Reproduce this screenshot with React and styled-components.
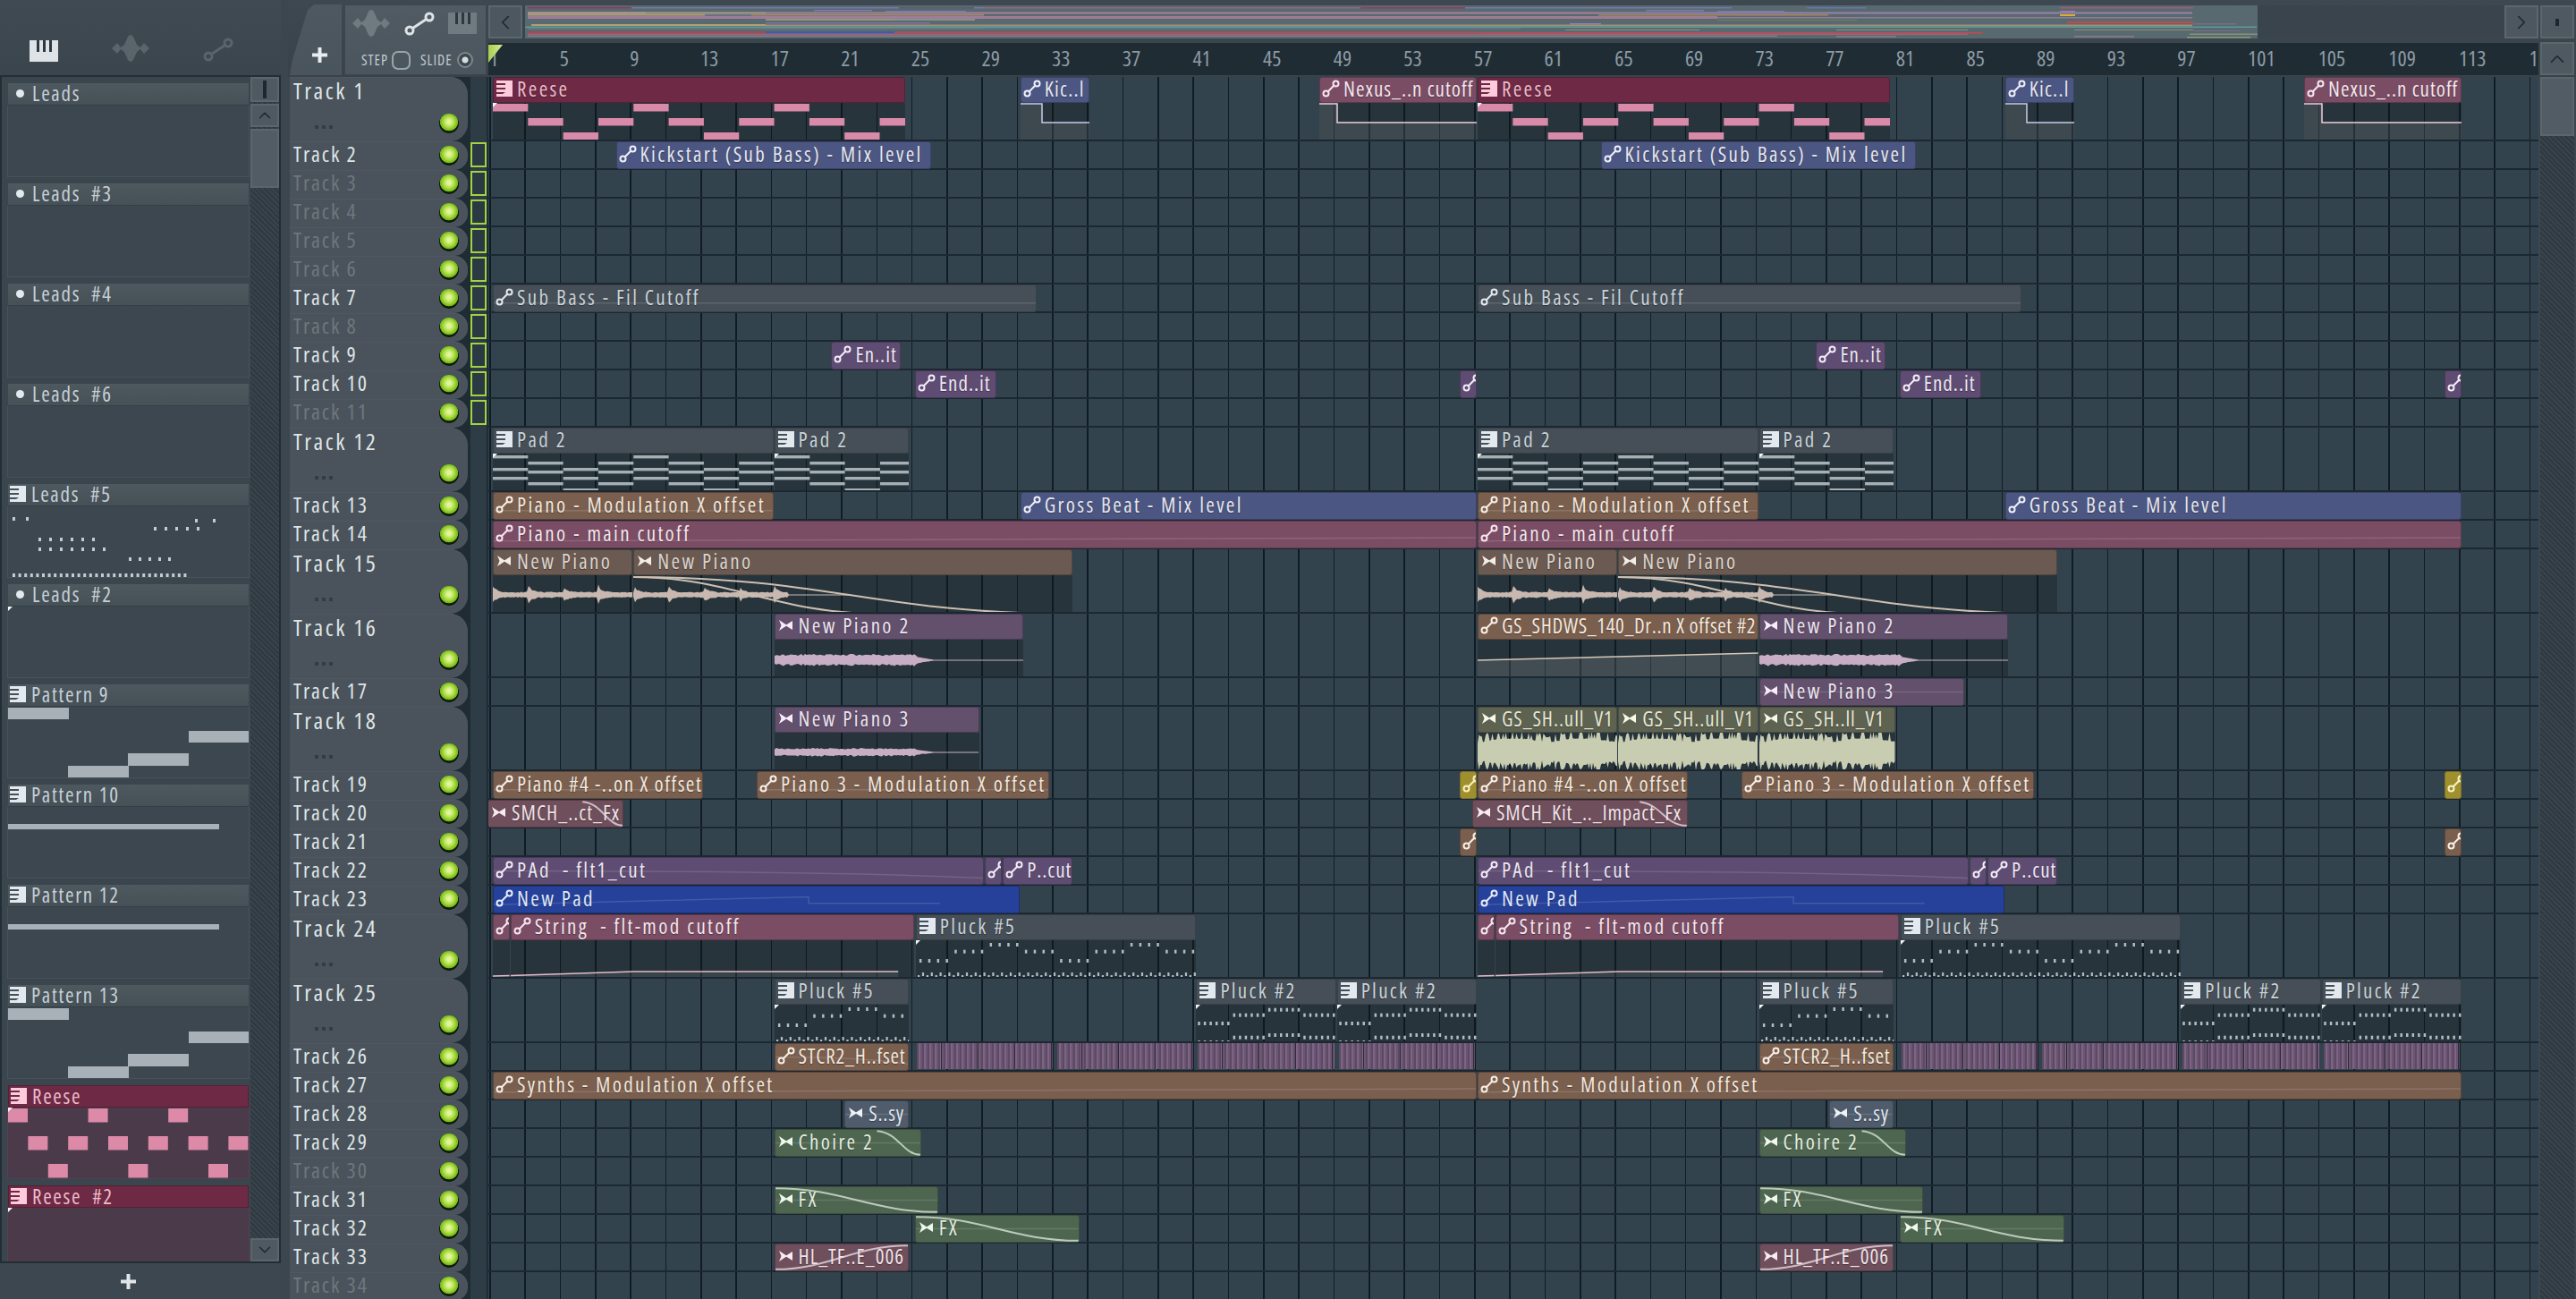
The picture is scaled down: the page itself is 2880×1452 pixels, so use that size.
import React from 'react';
import styled, { createGlobalStyle } from 'styled-components';
import { ChevronUp, ChevronDown, ChevronLeft, ChevronRight } from 'lucide-react';

const BAR = 19.66;
const STEP = BAR * 2;
const FONT = '"Open Sans", "Roboto", "Liberation Sans", sans-serif';

const GlobalStyle = createGlobalStyle`
    html, body { margin: 0; padding: 0; background: #3b464e; }
    * { box-sizing: border-box; }
`;

const tones = {
    reese: { bg: '#6e2a44', edge: '#55203a', text: '#ecbccd', icon: '#fdcbdc' },
    rose: { bg: '#7b4d65', edge: '#5e394d', text: '#f3e6ec', icon: '#f6e6ee' },
    blue: { bg: '#4c5682', edge: '#3a4266', text: '#e6e7ee', icon: '#eef0f8' },
    brown: { bg: '#7a5f4f', edge: '#5b463a', text: '#f2e7dd', icon: '#f8efe6' },
    purple: { bg: '#5f4c72', edge: '#483958', text: '#ece6f2', icon: '#f2ecf8' },
    lilac: { bg: '#63506c', edge: '#4b3c52', text: '#ece4f0', icon: '#f8ecfa' },
    deep: { bg: '#26419a', edge: '#1a2f75', text: '#dfe6f8', icon: '#e6ecfc' },
    gray: { bg: '#464f57', edge: '#384047', text: '#c8d2d8', icon: '#e2eaef' },
    taupe: { bg: '#6a5a51', edge: '#52453e', text: '#dcd4ce', icon: '#f2ece6' },
    olive: { bg: '#5e6250', edge: '#4a4d3e', text: '#e4e6d6', icon: '#f6f8e8' },
    green: { bg: '#4e6650', edge: '#3c4f3e', text: '#e2ece0', icon: '#f0f8ee' },
    mauve: { bg: '#6e4f5b', edge: '#553c46', text: '#f0e2e8', icon: '#f8ecf0' },
    slate: { bg: '#505c6c', edge: '#3e4854', text: '#dfe6ee', icon: '#eef3f8' },
    gold: { bg: '#a08f2f', edge: '#7f7124', text: '#f8f2c0', icon: '#f8f2c0' },
};

function rng(seed) {
    let s = seed;
    return () => {
        s = (s * 16807) % 2147483647;
        return s / 2147483647;
    };
}

function wavePath(w, mid, env, seed, step = 2) {
    const r = rng(seed);
    const top = [];
    const bottom = [];
    for (let x = 0; x <= w; x += step) {
        const a = env(x, r());
        top.push(`${x} ${(mid - a).toFixed(1)}`);
        bottom.unshift(`${x} ${(mid + a * (0.75 + 0.25 * r())).toFixed(1)}`);
    }
    return `M${top.join('L')}L${bottom.join('L')}Z`;
}

const pianoEnv = (offset, end, lineEnd) => (x, n) => {
    const at = x + offset;
    if (at > lineEnd) return 0;
    if (at > end) return 0.5;
    const phase = at % STEP;
    return 2.5 + 8.5 * Math.exp(-phase / 4) * (0.8 + 0.2 * n) + n;
};
const flatEnv = (amp, end) => (x, n) => {
    if (x > end + 20) return 0.5;
    if (x > end) return 0.5 + (amp * (end + 20 - x)) / 40;
    return amp * (0.7 + 0.3 * n);
};
const gsEnv = (x, n) => {
    const lobe = Math.abs(Math.sin((x / (BAR * 4)) * Math.PI));
    return 10 + 5 * lobe + (n > 0.62 ? 10 * n : 2 * n);
};

const Triangle = () => <polygon points="0,0 5,0 0,5" fill="#f4f6f6" />;

function ReeseArt({ w }) {
    const rects = [];
    for (let i = 0; i * STEP < w; i++) {
        const y = i % 2 ? 17 : i % 4 === 0 ? 1 : 33;
        rects.push(<rect key={i} x={i * STEP} y={y} width={STEP} height={8.5} fill="#d98aa8" />);
    }
    return <>{rects}<Triangle /></>;
}

function PadArt({ w }) {
    const rows = [[2, 16, 26], [9, 19, 32], [16, 26, 39], [9, 19, 32]];
    const rects = [];
    for (let i = 0; i * STEP < w; i++) {
        rows[i % 4].forEach((y) => {
            rects.push(<rect key={`${i}-${y}`} x={i * STEP} y={y} width={STEP} height={3.4} fill="#a6afb4" />);
        });
    }
    return <>{rects}<Triangle /></>;
}

function DotsArt({ w, rows, low, count }) {
    const rects = [];
    for (let i = 0; i * STEP < w; i++) {
        const gap = STEP / count;
        for (let d = 0; d < count; d++) {
            const x = i * STEP + gap * d + gap / 2 - 1;
            rects.push(<rect key={`a${i}-${d}`} x={x} y={rows[i % 4]} width={2.5} height={4} fill="#b4bcc1" />);
            if (low) rects.push(<rect key={`b${i}-${d}`} x={x} y={low[i % 4]} width={2.5} height={4} fill="#b4bcc1" />);
        }
    }
    return <>{rects}<Triangle /></>;
}

function Pluck5Art({ w }) {
    const rects = [];
    for (let x = 2, i = 0; x < w; x += 4.9, i++) {
        rects.push(<rect key={i} x={x} y={i % 2 ? 36 : 39} width={2.2} height={4} fill="#b4bcc1" />);
    }
    return <><DotsArt w={w} rows={[21, 10.7, 3, 10.7]} count={4} />{rects}</>;
}

function StepArt({ w, x, line }) {
    return (
        <>
            <path d={`M0 1H${x}V22H${w}V44H0Z`} fill="rgba(255,255,255,0.1)" />
            <path d={`M0 1H${x}V22H${w}`} fill="none" stroke={line} strokeWidth="1.5" />
        </>
    );
}

function RampArt({ w, d, fill, line }) {
    return (
        <>
            <path d={`${d}V44H0Z`} fill={fill} />
            <path d={d} fill="none" stroke={line} strokeWidth="1.5" />
        </>
    );
}

const artFor = {
    reese: (w) => <ReeseArt w={w} />,
    pad: (w) => <PadArt w={w} />,
    pluck5: (w) => <Pluck5Art w={w} />,
    pluck2: (w) => <DotsArt w={w} rows={[19, 9.7, 3.7, 9.7]} low={[40, 34.7, 32, 34.7]} count={6} />,
    kic: (w) => <StepArt w={w} x={24} line="#c8cce8" />,
    nexus: (w) => <StepArt w={w} x={20} line="#eccfdc" />,
    piano1: (w) => <path d={wavePath(w, 22, pianoEnv(0, 340, 500), 11)} fill="#c8b8b0" />,
    piano2: (w) => (
        <>
            <path d={wavePath(w, 22, pianoEnv(157, 330, 400), 17)} fill="#c8b8b0" />
            <path d="M0 2C110 2 160 43 275 43" fill="none" stroke="#cdbfb2" strokeWidth="2" />
            <path d="M0 2C220 2 270 43 489 43" fill="none" stroke="#cdbfb2" strokeWidth="2" />
        </>
    ),
    newPiano2: (w) => <path d={wavePath(w, 23, flatEnv(7, 158), 23)} fill="#c8aec4" />,
    newPiano3: (w) => <path d={wavePath(w, 22, flatEnv(5, 158), 29)} fill="#c8aec4" />,
    gsOffset: (w) => <RampArt w={w} d={`M0 23L${w} 15`} fill="rgba(255,255,255,0.12)" line="#d8c8b8" />,
    gs: (w) => <path d={wavePath(w, 22, gsEnv, 37, 1.5)} fill="#c8ccb0" />,
    stringHead: (w) => <RampArt w={w} d={`M0 40L${w} 39.5`} fill="rgba(255,255,255,0.08)" line="#e4bccc" />,
    string: (w) => (
        <RampArt w={w} d={`M0 39.5L${BAR * 7} 35H${w - 18}`} fill="rgba(255,255,255,0.08)" line="#e4bccc" />
    ),
};

const faintLines = {
    flat: 'M0 68H100',
    rise: 'M0 75C40 72 70 68 100 62',
    fall: 'M0 50C50 50 80 60 100 78',
    step: 'M0 70L60 40V65H85',
    mid: 'M0 50H100',
};
const curves = {
    fx: 'M0 4C40 4 60 96 100 96',
    tail: 'M70 4C85 10 88 96 100 96',
    end: 'M78 4C88 14 90 96 100 96',
    cross: 'M0 96C40 96 60 4 100 4',
};

const both = (list) => [...list, ...list.map((c) => ({ ...c, b: c.b + 56 }))];

const trackClips = {
    1: both([
        { b: 0, l: 23.5, n: 'Reese', k: 'p', c: 'reese', art: 'reese' },
        { b: 30, l: 4, n: 'Kic..l', k: 'a', c: 'blue', art: 'kic', ls: 1.2 },
        { b: 47, l: 9, n: 'Nexus_..n cutoff', k: 'a', c: 'rose', art: 'nexus', ls: 1 },
    ]),
    2: both([{ b: 7, l: 18, n: 'Kickstart (Sub Bass) - Mix level', k: 'a', c: 'blue' }]),
    7: both([{ b: 0, l: 31, n: 'Sub Bass - Fil Cutoff', k: 'a', c: 'gray', line: 'flat' }]),
    9: both([{ b: 19.25, l: 4, n: 'En..it', k: 'a', c: 'purple', ls: 1 }]),
    10: both([
        { b: 24, l: 4.7, n: 'End..it', k: 'a', c: 'purple', ls: 1 },
        { b: 55, l: 1, n: '', k: 'a', c: 'purple' },
    ]),
    12: both([
        { b: 0, l: 16, n: 'Pad 2', k: 'p', c: 'gray', art: 'pad' },
        { b: 16, l: 7.7, n: 'Pad 2', k: 'p', c: 'gray', art: 'pad' },
    ]),
    13: both([
        { b: 0, l: 16, n: 'Piano - Modulation X offset', k: 'a', c: 'brown', line: 'flat' },
        { b: 30, l: 26, n: 'Gross Beat - Mix level', k: 'a', c: 'blue' },
    ]),
    14: both([{ b: 0, l: 56, n: 'Piano - main cutoff', k: 'a', c: 'rose', line: 'rise' }]),
    15: both([
        { b: 0, l: 8, n: 'New Piano', k: 'w', c: 'taupe', art: 'piano1' },
        { b: 8, l: 25, n: 'New Piano', k: 'w', c: 'taupe', art: 'piano2' },
    ]),
    16: [
        { b: 16, l: 14.2, n: 'New Piano 2', k: 'w', c: 'lilac', art: 'newPiano2' },
        { b: 56, l: 16, n: 'GS_SHDWS_140_Dr..n X offset #2', k: 'a', c: 'brown', art: 'gsOffset', ls: 0.6 },
        { b: 72, l: 14.2, n: 'New Piano 2', k: 'w', c: 'lilac', art: 'newPiano2' },
    ],
    17: [{ b: 72, l: 11.7, n: 'New Piano 3', k: 'w', c: 'lilac', line: 'mid' }],
    18: [
        { b: 16, l: 11.7, n: 'New Piano 3', k: 'w', c: 'lilac', art: 'newPiano3' },
        { b: 56, l: 8, n: 'GS_SH..ull_V1', k: 'w', c: 'olive', art: 'gs', ls: 0.9 },
        { b: 64, l: 8, n: 'GS_SH..ull_V1', k: 'w', c: 'olive', art: 'gs', ls: 0.9 },
        { b: 72, l: 7.8, n: 'GS_SH..ll_V1', k: 'w', c: 'olive', art: 'gs', ls: 0.9 },
    ],
    19: both([
        { b: 0, l: 12, n: 'Piano #4 -..on X offset', k: 'a', c: 'brown', line: 'flat', ls: 1.5 },
        { b: 15, l: 16.7, n: 'Piano 3 - Modulation X offset', k: 'a', c: 'brown', line: 'flat' },
        { b: 55, l: 1, n: '', k: 'a', c: 'gold' },
    ]),
    20: [
        { b: -0.3, l: 7.8, n: 'SMCH_..ct_Fx', k: 'w', c: 'mauve', curve: 'tail', ls: 1 },
        { b: 55.7, l: 12.3, n: 'SMCH_Kit_.._Impact_Fx', k: 'w', c: 'mauve', curve: 'end', ls: 0.8 },
    ],
    21: both([{ b: 55, l: 1, n: '', k: 'a', c: 'brown' }]),
    22: both([
        { b: 0, l: 28, n: 'PAd  - flt1_cut', k: 'a', c: 'purple', line: 'fall' },
        { b: 28, l: 1, n: '', k: 'a', c: 'purple' },
        { b: 29, l: 4, n: 'P..cut', k: 'a', c: 'purple', ls: 1 },
    ]),
    23: both([{ b: 0, l: 30, n: 'New Pad', k: 'a', c: 'deep', line: 'step' }]),
    24: both([
        { b: 0, l: 1, n: '', k: 'a', c: 'rose', art: 'stringHead' },
        { b: 1, l: 23, n: 'String  - flt-mod cutoff', k: 'a', c: 'rose', art: 'string' },
        { b: 24.05, l: 16, n: 'Pluck #5', k: 'p', c: 'gray', art: 'pluck5' },
    ]),
    25: both([
        { b: 16, l: 7.7, n: 'Pluck #5', k: 'p', c: 'gray', art: 'pluck5' },
        { b: 40, l: 8, n: 'Pluck #2', k: 'p', c: 'gray', art: 'pluck2' },
        { b: 48, l: 8, n: 'Pluck #2', k: 'p', c: 'gray', art: 'pluck2' },
    ]),
    26: both([
        { b: 16, l: 7.7, n: 'STCR2_H..fset', k: 'a', c: 'brown', line: 'fall', ls: 0.8 },
        { b: 24.1, l: 7.8, strip: true },
        { b: 32.1, l: 7.8, strip: true },
        { b: 40.1, l: 7.8, strip: true },
        { b: 48.1, l: 7.8, strip: true },
    ]),
    27: both([{ b: 0, l: 56, n: 'Synths - Modulation X offset', k: 'a', c: 'brown', line: 'rise' }]),
    28: both([{ b: 20, l: 3.7, n: 'S..sy', k: 'w', c: 'slate', line: 'mid', ls: 0.8 }]),
    29: both([{ b: 16, l: 8.4, n: 'Choire 2', k: 'w', c: 'green', line: 'mid', curve: 'tail' }]),
    31: both([{ b: 16, l: 9.4, n: 'FX', k: 'w', c: 'green', line: 'mid', curve: 'fx' }]),
    32: both([{ b: 24, l: 9.4, n: 'FX', k: 'w', c: 'green', line: 'mid', curve: 'fx' }]),
    33: both([{ b: 16, l: 7.7, n: 'HL_TF..E_006', k: 'w', c: 'mauve', curve: 'cross', ls: 1 }]),
};

const tallTracks = [1, 12, 15, 16, 18, 24, 25];
const mutedTracks = [3, 4, 5, 6, 8, 11, 30, 34];
const tracks = Array.from({ length: 34 }, (_, i) => i + 1);

const Screen = styled.div`
    display: flex;
    width: 2880px;
    height: 1452px;
    overflow: hidden;
    background: #3b464e;
    font-family: ${FONT};
    font-stretch: 85%;
`;

const Picker = styled.aside`
    width: 314px;
    flex: none;
    display: flex;
    flex-direction: column;
    height: 100%;
`;

const PickerTop = styled.div`
    height: 86px;
    flex: none;
    display: flex;
    align-items: flex-end;
    gap: 60px;
    padding: 0 0 15px 33px;
    background: linear-gradient(#3f4a52, #3a454d);
    border-bottom: 2px solid #232f37;
`;

const PickerMiddle = styled.div`
    flex: 1;
    min-height: 0;
    display: flex;
    border-left: 2px solid #222e36;
    border-right: 2px solid #222e36;
    border-bottom: 2px solid #222e36;
`;

const PickerList = styled.div`
    flex: 1;
    padding: 7px 1px 0 6px;
    overflow: hidden;
    background: #3a454e;
`;

const Item = styled.div`
    height: 112px;
    display: flex;
    flex-direction: column;
    padding-bottom: 7px;
`;

const ItemHead = styled.div`
    height: 25px;
    flex: none;
    display: flex;
    align-items: center;
    gap: 6px;
    margin: 0 1px;
    padding: 0 0 2px 2px;
    background: ${(p) => (p.$rose ? '#6e2a44' : 'linear-gradient(#4e585f, #465057)')};
    border: ${(p) => (p.$rose ? '1px solid #571f36' : 'none')};
    border-bottom: 1px solid ${(p) => (p.$rose ? '#571f36' : '#333e46')};
    color: ${(p) => (p.$rose ? '#ecbccd' : '#c6d0d6')};
    font-size: 23px;
    line-height: 24px;
    letter-spacing: 1.7px;
    white-space: pre;
`;

const ItemBody = styled.div`
    flex: 1;
    background: ${(p) => (p.$rose ? '#4a3a4a' : '#3c4750')};
    border: 1px solid ${(p) => (p.$rose ? '#524250' : '#465159')};
    border-top: none;
    overflow: hidden;
`;

const Dot = styled.span`
    width: 9px;
    height: 9px;
    margin: 0 3px 0 7px;
    border-radius: 50%;
    background: #e2eaee;
`;

const ScrollColumn = styled.div`
    width: 32px;
    flex: none;
    display: flex;
    flex-direction: column;
    gap: 2px;
    background: repeating-linear-gradient(45deg, #39434b 0 2px, #2f3941 2px 4px);
`;

const ScrollButton = styled.div`
    height: ${(p) => p.$h}px;
    flex: none;
    display: flex;
    align-items: center;
    justify-content: center;
    background: #4e5961;
    border: 2px solid #5a656c;
    color: #1c272e;
`;

const ScrollThumb = styled(ScrollButton)`
    background: #515c64;
`;

const ScrollFill = styled.div`
    flex: 1;
`;

const TickMark = styled.span`
    width: ${(p) => p.$w}px;
    height: ${(p) => p.$h}px;
    background: #1c272e;
`;

const PickerFoot = styled.div`
    height: 40px;
    flex: none;
    display: flex;
    align-items: center;
    justify-content: center;
    padding-right: 28px;
    background: #3c4750;
    color: #dfe5e8;
`;

const Playlist = styled.main`
    flex: 1;
    min-width: 0;
    display: flex;
    flex-direction: column;
    padding-left: 8px;
`;

const TopBar = styled.div`
    height: 86px;
    flex: none;
    display: flex;
    padding-left: 2px;
    background: linear-gradient(#3d4850, #394249);
`;

const TabArea = styled.div`
    width: 220px;
    flex: none;
    display: flex;
    gap: 3px;
    padding-top: 5px;
    height: 84px;
`;

const AddTab = styled.div`
    width: 58px;
    flex: none;
    height: 100%;
    display: flex;
    align-items: flex-end;
    padding: 0 0 14px 25px;
    color: #e8edef;
    background: linear-gradient(#4e5860, #4a545c);
    clip-path: polygon(0 100%, 3px 78%, 20px 8%, 27px 0, 100% 0, 100% 100%);
`;

const ToolTab = styled.div`
    flex: 1;
    min-width: 0;
    display: flex;
    flex-direction: column;
    background: linear-gradient(#515b63, #4b555d);
    border: 1px solid #3b464e;
    padding: 4px 10px 4px 8px;
`;

const ToolIcons = styled.div`
    display: flex;
    justify-content: space-between;
    align-items: center;
    height: 32px;
`;

const SnapRow = styled.div`
    display: flex;
    align-items: center;
    margin-top: auto;
    padding: 0 0 1px 10px;
    color: #c2ccd2;
    font-size: 16px;
    letter-spacing: 1px;
`;

const StepBox = styled.span`
    width: 21px;
    height: 21px;
    margin: 0 11px 0 4px;
    border: 2px solid #9aa5ab;
    border-radius: 7px;
`;

const SlideRadio = styled.span`
    width: 18px;
    height: 18px;
    margin-left: 5px;
    border-radius: 50%;
    border: 2px solid #7d878d;
    background: radial-gradient(circle, #d4dce0 0 3px, #3d474f 4px);
`;

const TimeArea = styled.div`
    flex: 1;
    min-width: 0;
    margin-left: 2px;
    display: flex;
    flex-direction: column;
`;

const OverviewRow = styled.div`
    height: 37px;
    margin-top: 6px;
    flex: none;
    display: flex;
    gap: 3px;
    background: #3a444c;
`;

const NavButton = styled.div`
    width: ${(p) => p.$w}px;
    flex: none;
    display: flex;
    align-items: center;
    justify-content: center;
    background: #4d5760;
    border: 2px solid #5c666d;
    color: #1c272e;
`;

const OverviewTrack = styled.div`
    flex: 1;
    min-width: 0;
`;

const Ruler = styled.div`
    position: relative;
    height: 36px;
    margin-top: 5px;
    flex: none;
    overflow: hidden;
    background: #1f2c34;
`;

const BarLabel = styled.span.attrs((p) => ({ style: { left: `${p.$x}px` } }))`
    position: absolute;
    top: 3px;
    color: #8d9ba5;
    font-size: 24px;
    line-height: 28px;
`;

const PlayMarker = styled.span`
    position: absolute;
    left: 0;
    top: 2px;
    width: 16px;
    height: 20px;
    background: linear-gradient(90deg, #a6cf4e, #d6eb9a);
    clip-path: polygon(0 0, 100% 0, 0 100%);
`;

const Corner = styled.div`
    width: 38px;
    flex: none;
    margin: 6px 2px 0 2px;
    display: flex;
    flex-direction: column;
    gap: 4px;
`;

const Body = styled.div`
    flex: 1;
    min-height: 0;
    display: flex;
    padding-left: 2px;
`;

const Rows = styled.div`
    flex: 1;
    min-width: 0;
    overflow: hidden;
`;

const Row = styled.div`
    height: ${(p) => (p.$tall ? 72 : 32)}px;
    display: flex;
    background: #1f2c34;
`;

const Head = styled.div`
    width: 199px;
    flex: none;
    display: flex;
    justify-content: space-between;
    padding: 0 10px 0 4px;
    align-items: ${(p) => (p.$tall ? 'flex-end' : 'center')};
    padding-bottom: ${(p) => (p.$tall ? 9 : 1)}px;
    background: #4a535b;
    border-radius: 0 ${(p) => (p.$tall ? 20 : 15)}px ${(p) => (p.$tall ? 20 : 15)}px 0;
    box-shadow: inset 0 1px 0 #4f5860;
`;

const NameColumn = styled.div`
    display: flex;
    flex-direction: column;
    align-self: stretch;
    justify-content: ${(p) => (p.$tall ? 'flex-start' : 'center')};
    padding-bottom: ${(p) => (p.$tall ? 0 : 3)}px;
`;

const TrackName = styled.span`
    color: ${(p) => (p.$muted ? '#6d777d' : '#dfe5e7')};
    font-size: ${(p) => (p.$tall ? 26 : 24)}px;
    line-height: ${(p) => (p.$tall ? 30 : 26)}px;
    letter-spacing: ${(p) => (p.$tall ? 2.5 : 1.9)}px;
`;

const MoreDots = styled.span`
    display: flex;
    gap: 4px;
    margin: 24px 0 0 24px;
    & > i {
        width: 4px;
        height: 4px;
        background: #333c43;
    }
`;

const Led = styled.span`
    width: 22px;
    height: 22px;
    flex: none;
    border-radius: 50%;
    background: radial-gradient(circle at 50% 42%, #e2f39a 0 12%, #a6db3e 38%, #74b416 58%, #0f1c0a 62% 74%, #7c868b 80%);
`;

const Strip = styled.div`
    width: 18px;
    flex: none;
    margin: 0 2px 0 3px;
    padding: 1px 0 3px;
    background: #2d3c45;
`;

const SelectBox = styled.span`
    display: block;
    height: 100%;
    border: 2px solid #a2d344;
    background: #2a3942;
`;

const Lane = styled.div`
    position: relative;
    flex: 1;
    min-width: 0;
    overflow: clip visible;
    border-bottom: 2px solid #1b2831;
    background-color: #33434d;
    background-image: repeating-linear-gradient(
        90deg,
        #101c25 0 1.6px,
        transparent 1.6px ${STEP}px
    );
    background-position: 1px 0;
`;

const ClipBox = styled.div.attrs((p) => ({
    style: { left: `${p.$x}px`, width: `${p.$w}px` },
}))`
    position: absolute;
    top: 0;
    bottom: 0;
    display: flex;
    flex-direction: column;
    overflow: clip visible;
`;

const ClipHead = styled.div`
    position: relative;
    height: ${(p) => (p.$tall ? 29 : 31)}px;
    flex: none;
    display: flex;
    align-items: center;
    padding: 0 0 3px 2px;
    gap: 4px;
    overflow: clip visible;
    background: ${(p) => p.$bg};
    border: 1px solid ${(p) => p.$edge};
    border-radius: 3px;
    color: ${(p) => p.$text};
    font-size: 23px;
    line-height: 24px;
    letter-spacing: ${(p) => p.$ls}px;
    white-space: pre;
    text-shadow: 0 1px 1px rgba(0, 0, 0, 0.35);
`;

const IconCell = styled.span`
    width: 20px;
    flex: none;
    display: flex;
    align-items: center;
    justify-content: center;
`;

const ClipBack = styled.div`
    flex: 1;
    min-height: 0;
    overflow: hidden;
    background: rgba(14, 20, 24, 0.3);
    & > svg {
        display: block;
    }
`;

const StripClip = styled.div.attrs((p) => ({
    style: { left: `${p.$x}px`, width: `${p.$w}px` },
}))`
    position: absolute;
    top: 0;
    bottom: 1px;
    background:
        repeating-linear-gradient(90deg, transparent 0 27px, #2e2a38 27px 28px, transparent 28px 41px),
        repeating-linear-gradient(90deg, #5b4a62 0 2px, #7e6386 2px 4px, #6a5572 4px 6px);
`;

const Overlay = styled.svg`
    position: absolute;
    inset: 0;
    width: 100%;
    height: 100%;
    pointer-events: none;
`;

const RightScroll = styled.div`
    width: 38px;
    flex: none;
    margin: 0 2px;
    display: flex;
    flex-direction: column;
    background: repeating-linear-gradient(45deg, #39434b 0 2px, #2f3941 2px 4px);
`;

function PatternIcon({ color, notch }) {
    return (
        <svg width="18" height="18" viewBox="0 0 18 18" style={{ display: 'block', flex: 'none' }}>
            <rect width="18" height="18" fill={color} />
            <path d="M0 3h10v2H0zM0 8h10v2H0zM0 13h10l-3 2H0z" fill={notch} />
        </svg>
    );
}

function AutoIcon({ color }) {
    return (
        <svg width="20" height="20" viewBox="0 0 20 20" fill="none" stroke={color} strokeWidth="2" style={{ display: 'block' }}>
            <circle cx="4.5" cy="15.5" r="3" />
            <circle cx="15.5" cy="4.5" r="3" />
            <path d="M6.8 13.2 13.2 6.8" />
        </svg>
    );
}

function AudioIcon({ color }) {
    return (
        <svg width="16" height="14" viewBox="0 0 16 14" fill={color} style={{ display: 'block' }}>
            <path d="M0 1 9 7 0 13 2.5 7Z" />
            <path d="M7 7 15 2V12Z" />
        </svg>
    );
}

function PianoGlyph({ color }) {
    return (
        <svg width="32" height="24" viewBox="0 0 32 24" style={{ display: 'block' }}>
            <rect width="32" height="24" fill={color} />
            <path d="M8 0h3v13H8zM15 0h3v13h-3zM22 0h3v13h-3z" fill="#2e3840" />
        </svg>
    );
}

function WaveGlyph({ color }) {
    return (
        <svg width="42" height="30" viewBox="0 0 42 30" style={{ display: 'block' }}>
            <path
                d="M0 15 6 9 10 14 14 11 18 2Q21-2 24 2L28 11 32 14 36 9 42 15 36 21 32 16 28 19 24 28Q21 32 18 28L14 19 10 16 6 21Z"
                fill={color}
            />
        </svg>
    );
}

function LinkGlyph({ color }) {
    return (
        <svg width="34" height="27" viewBox="0 0 34 27" fill="none" stroke={color} strokeWidth="3" style={{ display: 'block' }}>
            <circle cx="6" cy="21" r="4" />
            <circle cx="28" cy="6" r="4" />
            <path d="M9.5 18.5 24.5 8.5" />
        </svg>
    );
}

function PlusGlyph() {
    return (
        <svg width="17" height="17" viewBox="0 0 17 17" style={{ display: 'block' }}>
            <path d="M6.5 0h4v6.5H17v4h-6.5V17h-4v-6.5H0v-4h6.5z" fill="currentColor" />
        </svg>
    );
}

function Clip({ clip, tall }) {
    const x = 5 + clip.b * BAR;
    const w = clip.l * BAR - 1;
    if (clip.strip) return <StripClip $x={x} $w={w} />;
    const tone = tones[clip.c];
    const art = clip.art && artFor[clip.art];
    return (
        <ClipBox $x={x} $w={w}>
            <ClipHead $tall={tall} $bg={tone.bg} $edge={tone.edge} $text={tone.text} $ls={clip.ls ?? 2.35}>
                <IconCell>
                    {clip.k === 'p' && <PatternIcon color={tone.icon} notch={tone.bg} />}
                    {clip.k === 'a' && <AutoIcon color={tone.icon} />}
                    {clip.k === 'w' && <AudioIcon color={tone.icon} />}
                </IconCell>
                {clip.n}
                {(clip.line || clip.curve) && (
                    <Overlay viewBox="0 0 100 100" preserveAspectRatio="none">
                        {clip.line && (
                            <path d={faintLines[clip.line]} fill="none" stroke="rgba(255,255,255,0.13)" strokeWidth="1.5" vectorEffect="non-scaling-stroke" />
                        )}
                        {clip.curve && (
                            <path d={curves[clip.curve]} fill="none" stroke={tone.text} strokeOpacity="0.75" strokeWidth="2" vectorEffect="non-scaling-stroke" />
                        )}
                    </Overlay>
                )}
            </ClipHead>
            {tall && (
                <ClipBack>
                    {art && (
                        <svg width={w} height={44} viewBox={`0 0 ${w} 44`}>
                            {art(w)}
                        </svg>
                    )}
                </ClipBack>
            )}
        </ClipBox>
    );
}

function Track({ n }) {
    const tall = tallTracks.includes(n);
    const muted = mutedTracks.includes(n);
    const boxed = n >= 2 && n <= 11;
    return (
        <Row $tall={tall}>
            <Head $tall={tall}>
                <NameColumn $tall={tall}>
                    <TrackName $tall={tall} $muted={muted}>Track {n}</TrackName>
                    {tall && <MoreDots><i /><i /><i /></MoreDots>}
                </NameColumn>
                <Led />
            </Head>
            <Strip>{boxed && <SelectBox />}</Strip>
            <Lane>
                {(trackClips[n] || []).map((clip, i) => (
                    <Clip key={i} clip={clip} tall={tall} />
                ))}
            </Lane>
        </Row>
    );
}

const patternNotes = [
    [0, 1, 68, 13],
    [202, 27, 67, 13],
    [134, 52, 68, 14],
    [67, 66, 68, 13],
];
const reeseCells = [];
for (let i = 0; i < 12; i++) {
    reeseCells.push([i * 22.4, i % 2 ? 32 : i % 4 === 0 ? 1 : 63, 22, 15.5]);
}
// scattered plucks of the Leads #5 preview: [x of first, y, count, gap]
const leadsDots = [];
[
    [5, 12, 2, 15],
    [209, 14, 2, 20],
    [163, 23, 5, 12],
    [34, 35, 6, 12],
    [34, 46, 7, 12],
    [135, 57, 5, 11],
    [5, 75, 30, 6.6],
].forEach(([x, y, count, gap]) => {
    for (let d = 0; d < count; d++) leadsDots.push([x + d * gap, y, 3, 4]);
});

const items = [
    { name: 'Leads', kind: 'dot' },
    { name: 'Leads  #3', kind: 'dot' },
    { name: 'Leads  #4', kind: 'dot' },
    { name: 'Leads  #6', kind: 'dot' },
    { name: 'Leads  #5', kind: 'pattern', cells: leadsDots, fill: '#c4ccd0' },
    { name: 'Leads  #2', kind: 'dot', mark: true },
    { name: 'Pattern 9', kind: 'pattern', cells: patternNotes, fill: '#a8b1b7' },
    { name: 'Pattern 10', kind: 'pattern', cells: [[0, 19, 236, 6]], fill: '#a8b1b7' },
    { name: 'Pattern 12', kind: 'pattern', cells: [[0, 19, 236, 6]], fill: '#a8b1b7' },
    { name: 'Pattern 13', kind: 'pattern', cells: patternNotes, fill: '#a8b1b7' },
    { name: 'Reese', kind: 'pattern', rose: true, cells: reeseCells, fill: '#dd8aa8', mark: true },
    { name: 'Reese  #2', kind: 'pattern', rose: true, mark: true },
];

function PickerItem({ item }) {
    return (
        <Item>
            <ItemHead $rose={item.rose}>
                {item.kind === 'dot' ? <Dot /> : (
                    <PatternIcon color={item.rose ? '#fdcbdc' : '#e2eaef'} notch={item.rose ? '#6e2a44' : '#464f57'} />
                )}
                {item.name}
            </ItemHead>
            <ItemBody $rose={item.rose}>
                <svg width="269" height="81" viewBox="0 0 269 81" style={{ display: 'block' }}>
                    {(item.cells || []).map(([x, y, w, h], i) => (
                        <rect key={i} x={x} y={y} width={w} height={h} fill={item.fill} />
                    ))}
                    {item.mark && <Triangle />}
                </svg>
            </ItemBody>
        </Item>
    );
}

const bands = [
    [590, 706, 8, 1.5, '#8f3a58'], [706, 1005, 8, 1.5, '#7079a8'], [1005, 1089, 8, 1.5, '#56616a'],
    [1089, 1100, 8, 1.5, '#7079a8'], [1100, 1521, 8, 1.5, '#94667a'], [1521, 1638, 8, 1.5, '#9a3b5a'],
    [1638, 1936, 8, 1.5, '#7079a8'], [2020, 2086, 8, 1.5, '#6478a8'], [2303, 2452, 8, 1.5, '#a85a70'],
    [910, 975, 11, 1.5, '#7d7aa8'], [990, 1080, 12, 1.5, '#7d7aa8'], [1840, 1905, 11, 1.5, '#7d7aa8'],
    [1920, 1995, 12, 1.5, '#7d7aa8'], [2303, 2320, 12, 1.5, '#a080b0'],
    [590, 722, 13.5, 2, '#c2a296'], [722, 856, 13.5, 2, '#b09a88'], [856, 1787, 13.5, 2, '#a8809c'],
    [1787, 2451, 13.5, 2, '#9a80a8'], [590, 788, 16, 1.5, '#b8a078'], [788, 840, 16, 1.5, '#6c7a88'],
    [840, 1100, 16, 1.5, '#a88a70'], [1787, 2044, 16, 1.5, '#a08860'], [2303, 2320, 16, 2, '#d8b030'],
    [590, 1100, 18, 3, '#a07c98'], [1100, 1920, 18, 3, '#a07c90'], [1920, 2451, 19, 1.5, '#8c8090'],
    [856, 1000, 21, 2, '#8a9a78'], [1000, 1090, 21, 2, '#82938a'], [1920, 2076, 22, 1, '#787a60'],
    [2311, 2452, 24, 2, '#c84848'], [1755, 1790, 26, 1.5, '#a080b0'], [2452, 2500, 26, 1.5, '#75708a'],
    [856, 1040, 25, 1.5, '#8670a0'], [594, 856, 27, 2, '#b0a070'], [856, 2451, 27.5, 2, '#a09078'],
    [587, 2523, 29.5, 1.5, '#5f9a9a'], [590, 1100, 31.5, 1, '#78848c'], [1100, 1700, 31.5, 1, '#6f7f88'],
    [1750, 1900, 33, 1, '#8a9078'], [2053, 2200, 33, 1, '#8a9078'], [2319, 2452, 33, 1, '#8a9078'], [2452, 2505, 34, 1, '#75708a'],
    [590, 856, 35.5, 1.5, '#c04040'], [856, 1000, 35.5, 1.5, '#3a58c0'], [1000, 1100, 35.5, 1.5, '#c84848'],
    [1100, 1656, 35.5, 1.5, '#c24848'], [1656, 2217, 36, 1.5, '#c84848'], [590, 1100, 37.5, 1.5, '#a06080'],
    [1100, 2200, 37.5, 1.5, '#a06080'], [2448, 2525, 37.5, 1.5, '#8a9078'], [590, 850, 39.5, 1.5, '#8a7a88'],
    [850, 1987, 39.5, 1.5, '#8a7a88'], [2053, 2120, 40, 1.5, '#8a7a88'], [2319, 2386, 40, 1.5, '#8a7a88'], [2445, 2516, 41, 1.5, '#8a9a7a'],
];

function Overview() {
    return (
        <svg width="1937" height="37" viewBox="0 0 1937 37" style={{ display: 'block' }}>
            <rect width="1937" height="37" fill="#586970" />
            {bands.map(([a, b, y, h, fill], i) => (
                <rect key={i} x={a - 587} y={y - 6} width={b - a} height={h} fill={fill} />
            ))}
        </svg>
    );
}

const barLabels = [];
for (let n = 1; n <= 117; n += 4) barLabels.push(n);

function App() {
    return (
        <Screen>
            <GlobalStyle />
            <Picker>
                <PickerTop>
                    <PianoGlyph color="#dde3e6" />
                    <WaveGlyph color="#59646b" />
                    <LinkGlyph color="#59646b" />
                </PickerTop>
                <PickerMiddle>
                    <PickerList>
                        {items.map((item) => <PickerItem key={item.name} item={item} />)}
                    </PickerList>
                    <ScrollColumn>
                        <ScrollButton $h={28}><TickMark $w={4} $h={20} /></ScrollButton>
                        <ScrollButton $h={26}><ChevronUp size={22} strokeWidth={1.5} /></ScrollButton>
                        <ScrollThumb $h={66} />
                        <ScrollFill />
                        <ScrollButton $h={26}><ChevronDown size={22} strokeWidth={1.5} /></ScrollButton>
                    </ScrollColumn>
                </PickerMiddle>
                <PickerFoot><PlusGlyph /></PickerFoot>
            </Picker>
            <Playlist>
                <TopBar>
                    <TabArea>
                        <AddTab><PlusGlyph /></AddTab>
                        <ToolTab>
                            <ToolIcons>
                                <WaveGlyph color="#707a81" />
                                <LinkGlyph color="#dde3e6" />
                                <PianoGlyph color="#707a81" />
                            </ToolIcons>
                            <SnapRow>
                                STEP<StepBox />SLIDE<SlideRadio />
                            </SnapRow>
                        </ToolTab>
                    </TabArea>
                    <TimeArea>
                        <OverviewRow>
                            <NavButton $w={38}><ChevronLeft size={26} strokeWidth={1.5} /></NavButton>
                            <OverviewTrack><Overview /></OverviewTrack>
                            <NavButton $w={38}><ChevronRight size={26} strokeWidth={1.5} /></NavButton>
                        </OverviewRow>
                        <Ruler>
                            {barLabels.map((n) => (
                                <BarLabel key={n} $x={1 + (n - 1) * BAR}>{n}</BarLabel>
                            ))}
                            <PlayMarker />
                        </Ruler>
                    </TimeArea>
                    <Corner>
                        <ScrollButton $h={37}><TickMark $w={4} $h={8} /></ScrollButton>
                        <ScrollButton $h={37}><ChevronUp size={26} strokeWidth={1.5} /></ScrollButton>
                    </Corner>
                </TopBar>
                <Body>
                    <Rows>
                        {tracks.map((n) => <Track key={n} n={n} />)}
                    </Rows>
                    <RightScroll>
                        <ScrollThumb $h={66} />
                    </RightScroll>
                </Body>
            </Playlist>
        </Screen>
    );
}

export default App;
